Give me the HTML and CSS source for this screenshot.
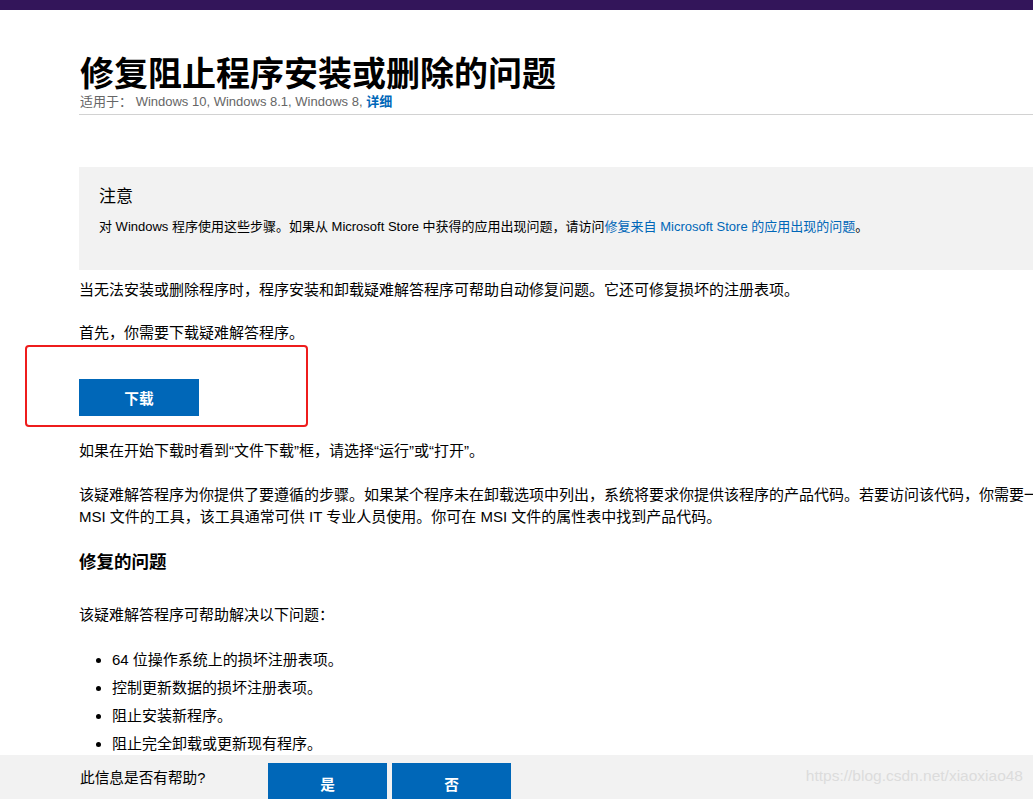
FILE: index.html
```html
<!DOCTYPE html>
<html lang="zh-CN">
<head>
<meta charset="utf-8">
<title>修复阻止程序安装或删除的问题</title>
<link rel="stylesheet" href="styles.css">
</head>
<body>
<div class="topbar"></div>
<main class="content">
  <h1 class="title">修复阻止程序安装或删除的问题</h1>
  <div class="applies">适用于： <span class="os">Windows 10, Windows 8.1, Windows 8,</span> <a class="more">详细</a></div>
  <div class="rule"></div>

  <section class="notice">
    <div class="notice-title">注意</div>
    <p class="notice-text">对 Windows 程序使用这些步骤。如果从 Microsoft Store 中获得的应用出现问题，请访问<a class="link">修复来自 Microsoft Store 的应用出现的问题</a>。</p>
  </section>

  <p class="p p1">当无法安装或删除程序时，程序安装和卸载疑难解答程序可帮助自动修复问题。它还可修复损坏的注册表项。</p>
  <p class="p p2">首先，你需要下载疑难解答程序。</p>
  <div class="dl-wrap"><button class="btn dl">下载</button></div>
  <p class="p p3">如果在开始下载时看到“文件下载”框，请选择“运行”或“打开”。</p>
  <p class="p p4">该疑难解答程序为你提供了要遵循的步骤。如果某个程序未在卸载选项中列出，系统将要求你提供该程序的产品代码。若要访问该代码，你需要一个用于读取 MSI 文件的工具，该工具通常可供 IT 专业人员使用。你可在 MSI 文件的属性表中找到产品代码。</p>
  <h2 class="h2">修复的问题</h2>
  <p class="p p5">该疑难解答程序可帮助解决以下问题：</p>
  <ul class="list">
    <li>64 位操作系统上的损坏注册表项。</li>
    <li>控制更新数据的损坏注册表项。</li>
    <li>阻止安装新程序。</li>
    <li>阻止完全卸载或更新现有程序。</li>
  </ul>
</main>

<div class="annot"></div>

<footer class="feedback">
  <span class="fb-q">此信息是否有帮助?</span>
  <button class="btn fb">是</button>
  <button class="btn fb">否</button>
  <span class="watermark">https://blog.csdn.net/xiaoxiao48</span>
</footer>
</body>
</html>
```

FILE: styles.css
```css
html, body {
  margin: 0;
  padding: 0;
  height: 100%;
  overflow: hidden;
  background: #fff;
}
body {
  font-family: "Liberation Sans", "Noto Sans CJK SC", sans-serif;
  color: #000;
  font-size: 15px;
  position: relative;
}
.topbar {
  height: 10px;
  background: #33155a;
}
.content {
  width: 1045px;
  padding-left: 79px;
}
.title {
  margin: 42px 0 0 1px;
  font-family: "Noto Sans CJK SC", sans-serif;
  font-size: 34px;
  font-weight: 700;
  line-height: 40px;
  letter-spacing: 0;
}
.applies {
  font-size: 13px;
  line-height: 16px;
  color: #666;
  margin-left: 1px;
  margin-top: 2px;
}
.applies .os { color: #666; }
.more { color: #0067b8; font-weight: 700; }
.rule {
  margin-top: 4px;
  height: 1px;
  background: #d2d2d2;
}
.notice {
  margin-top: 52px;
  background: #f2f2f2;
  padding: 19px 20px 33px 20px;
}
.notice-title {
  font-size: 17px;
  line-height: 22px;
}
.notice-text {
  margin: 9px 0 0 0;
  font-size: 13px;
  line-height: 20px;
}
.link { color: #0067b8; }
.p {
  margin: 0;
  line-height: 22px;
}
.p1 { margin-top: 9px; }
.p2 { margin-top: 21px; }
.dl-wrap { margin-top: 35px; }
.btn {
  border: 0;
  background: #0067b8;
  color: #fff;
  font-family: "Liberation Sans", "Noto Sans CJK SC", sans-serif;
  font-weight: 700;
  font-size: 14.67px;
  padding: 0;
  cursor: pointer;
}
.dl {
  width: 120px;
  height: 37px;
  display: block;
}
.p3 { margin-top: 24px; }
.p4 { margin-top: 22px; }
.h2 {
  margin: 22px 0 0 0;
  font-size: 17.5px;
  font-weight: 700;
  line-height: 24px;
}
.p5 { margin-top: 30px; }
.list {
  margin: 20px 0 0 0;
  padding-left: 33px;
}
.list li {
  line-height: 28px;
}
.annot {
  position: absolute;
  left: 25px;
  top: 345px;
  width: 279px;
  height: 78px;
  border: 2px solid #ee1c1c;
  border-radius: 4px;
}
.feedback {
  position: fixed;
  left: 0;
  right: 0;
  bottom: 0;
  height: 44px;
  background: #f2f2f2;
  display: flex;
  align-items: flex-start;
  padding: 8px 0 0 80px;
  box-sizing: border-box;
  overflow: hidden;
  font-size: 14.67px;
}
.fb-q {
  width: 188px;
  line-height: 30px;
  flex: none;
}
.fb {
  width: 119px;
  height: 40px;
  flex: none;
  margin-right: 5px;
}
.watermark {
  position: absolute;
  right: 10px;
  top: 12px;
  font-size: 15.5px;
  color: #dcdcdc;
  letter-spacing: 0;
}
```
